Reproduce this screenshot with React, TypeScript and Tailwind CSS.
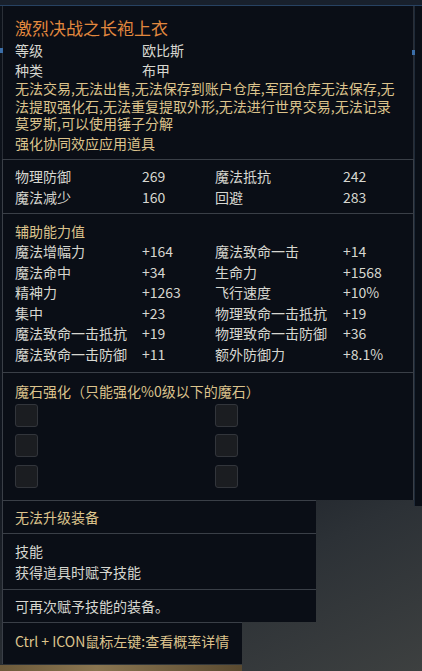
const basic: [string, string, string, string][] = [
  ["物理防御", "269", "魔法抵抗", "242"],
  ["魔法减少", "160", "回避", "283"],
];

const extra: [string, string, string, string][] = [
  ["魔法增幅力", "+164", "魔法致命一击", "+14"],
  ["魔法命中", "+34", "生命力", "+1568"],
  ["精神力", "+1263", "飞行速度", "+10%"],
  ["集中", "+23", "物理致命一击抵抗", "+19"],
  ["魔法致命一击抵抗", "+19", "物理致命一击防御", "+36"],
  ["魔法致命一击防御", "+11", "额外防御力", "+8.1%"],
];

const StatRow = ({ row, lh }: { row: [string, string, string, string]; lh: string }) => (
  <div className={`grid grid-cols-[127px_73px_128px_1fr] ${lh}`}>
    <span>{row[0]}</span>
    <span>{row[1]}</span>
    <span>{row[2]}</span>
    <span>{row[3]}</span>
  </div>
);

const Slot = () => (
  <div className="w-[23px] h-[23px] rounded-[3px] bg-[#1b1d21] border border-[#32353b]"></div>
);

export default function App() {
  return (
    <div className="relative w-[422px] h-[671px] overflow-hidden bg-[linear-gradient(155deg,#0c1119_0%,#10151e_55%,#2c3136_80%,#3d4040_100%)] font-['Noto_Sans_CJK_SC',sans-serif] text-[14px] text-[#d7d7d0]">
      {/* top strip */}
      <div className="h-[6px] bg-[#18202c] border-b border-[#274262]"></div>

      {/* right edge strip */}
      <div className="absolute right-0 top-[6px] w-[8px] h-[500px] bg-[#0a0f17] border-l border-[#1f2a38]"></div>
      <div className="absolute left-0 top-[48px] w-[3px] h-[5px] bg-[#3b6ea8]"></div>
      <div className="absolute left-[412px] top-[50px] w-[3px] h-[5px] bg-[#3b6ea8]"></div>

      <div className="flex flex-col items-start ml-[2px]">
        {/* section 1 */}
        <div className="w-[412px] bg-[#0a0e16] border-x border-[#2a2f37] pl-[12px] pt-[10px] pb-[6px]">
          <div className="text-[17px] leading-[24px] text-[#e2883e]">激烈决战之长袍上衣</div>
          <div className="grid grid-cols-[127px_1fr] leading-[20px]">
            <span>等级</span>
            <span>欧比斯</span>
            <span>种类</span>
            <span>布甲</span>
          </div>
          <div className="leading-[17.5px] text-[#dcc38c] pr-[18px]">
            无法交易,无法出售,无法保存到账户仓库,军团仓库无法保存,无法提取强化石,无法重复提取外形,无法进行世界交易,无法记录莫罗斯,可以使用锤子分解
          </div>
          <div className="leading-[20px] text-[#dcc38c]">强化协同效应应用道具</div>
        </div>

        {/* section 2 */}
        <div className="w-[412px] bg-[#0a0e16] border-x border-t border-[#3a3f47] pl-[12px] pt-[6px] pb-[5px]">
          {basic.map((r) => (
            <StatRow key={r[0]} row={r} lh="leading-[21px]" />
          ))}
        </div>

        {/* section 3 */}
        <div className="w-[412px] bg-[#0a0e16] border-x border-t border-[#3a3f47] pl-[12px] pt-[7px] pb-[7px]">
          <div className="leading-[20.6px] text-[#dcc38c]">辅助能力值</div>
          {extra.map((r) => (
            <StatRow key={r[0]} row={r} lh="leading-[20.6px]" />
          ))}
        </div>

        {/* section 4 */}
        <div className="w-[412px] bg-[#0a0e16] border-x border-t border-[#3a3f47] pl-[12px] pt-[8px] pb-[12px]">
          <div className="leading-[20px] text-[#dcc38c]">魔石强化（只能强化%0级以下的魔石）</div>
          <div className="mt-[3px] grid grid-cols-[200px_1fr] gap-y-[7.5px]">
            <Slot />
            <Slot />
            <Slot />
            <Slot />
            <Slot />
            <Slot />
          </div>
        </div>

        {/* section 5 */}
        <div className="w-[314px] bg-[#0a0e16] border-l border-t border-[#3a3f47] pl-[12px] pt-[6px] pb-[6px]">
          <div className="leading-[20px] text-[#dcc38c]">无法升级装备</div>
        </div>

        {/* section 6 */}
        <div className="w-[314px] bg-[#0a0e16] border-l border-t border-[#3a3f47] pl-[12px] pt-[7px] pb-[6px] leading-[21px]">
          <div>技能</div>
          <div>获得道具时赋予技能</div>
        </div>

        {/* section 7 */}
        <div className="w-[314px] bg-[#0a0e16] border-l border-t border-[#3a3f47] pl-[12px] pt-[6px] pb-[6px]">
          <div className="leading-[20px]">可再次赋予技能的装备。</div>
        </div>

        {/* section 8 */}
        <div className="w-[240px] bg-[#0a0e16] border-l border-t border-[#3a3f47] pl-[12px] pt-[8px] pb-[13px]">
          <div className="leading-[20px] text-[#dcc38c] whitespace-nowrap">Ctrl + ICON鼠标左键:查看概率详情</div>
        </div>
      </div>

      {/* bottom game background */}
      <div className="absolute left-0 bottom-0 w-[242px] h-[6px] bg-[linear-gradient(90deg,#6d5a3a,#8a7550_40%,#5a4a30)]"></div>
    </div>
  );
}
